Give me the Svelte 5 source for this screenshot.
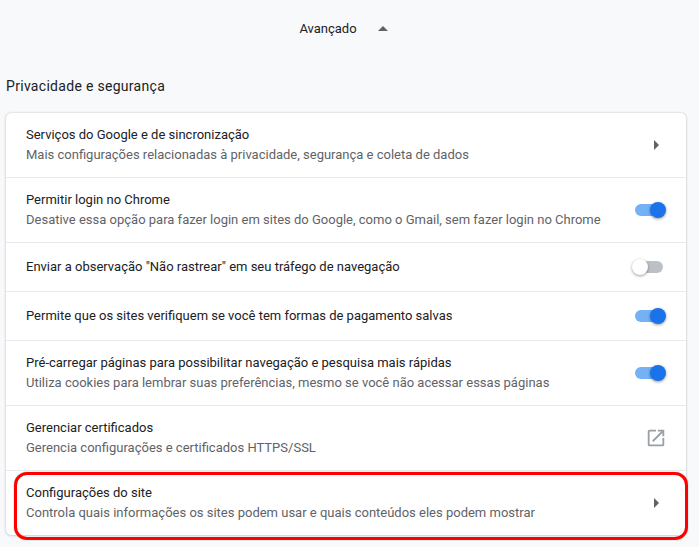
<script lang="ts">
  type Row = { title: string; sub?: string; kind: 'arrow' | 'on' | 'off' | 'ext'; h: number; mark?: boolean };

  const rows: Row[] = [
    { title: 'Serviços do Google e de sincronização', sub: 'Mais configurações relacionadas à privacidade, segurança e coleta de dados', kind: 'arrow', h: 64 },
    { title: 'Permitir login no Chrome', sub: 'Desative essa opção para fazer login em sites do Google, como o Gmail, sem fazer login no Chrome', kind: 'on', h: 65 },
    { title: 'Enviar a observação "Não rastrear" em seu tráfego de navegação', kind: 'off', h: 49 },
    { title: 'Permite que os sites verifiquem se você tem formas de pagamento salvas', kind: 'on', h: 49 },
    { title: 'Pré-carregar páginas para possibilitar navegação e pesquisa mais rápidas', sub: 'Utiliza cookies para lembrar suas preferências, mesmo se você não acessar essas páginas', kind: 'on', h: 65 },
    { title: 'Gerenciar certificados', sub: 'Gerencia configurações e certificados HTTPS/SSL', kind: 'ext', h: 65 },
    { title: 'Configurações do site', sub: 'Controla quais informações os sites podem usar e quais conteúdos eles podem mostrar', kind: 'arrow', h: 65, mark: true }
  ];
</script>

<div class="page">
  <div class="advanced">
    <span>Avançado</span>
    <i class="caret"></i>
  </div>

  <h2>Privacidade e segurança</h2>

  <div class="card">
    {#each rows as row}
      <div class="row" style="height:{row.h}px">
        <div class="text">
          <div class="title">{row.title}</div>
          {#if row.sub}<div class="sub">{row.sub}</div>{/if}
        </div>
        {#if row.kind === 'arrow'}
          <i class="arrow"></i>
        {:else if row.kind === 'ext'}
          <svg class="ext" viewBox="0 0 24 24" width="22" height="22">
            <path fill="#9aa0a6" d="M19 19H5V5h7V3H5a2 2 0 0 0-2 2v14a2 2 0 0 0 2 2h14a2 2 0 0 0 2-2v-7h-2v7zM14 3v2h3.59l-9.83 9.83 1.41 1.41L19 6.41V10h2V3h-7z"/>
          </svg>
        {:else}
          <div class="toggle" class:on={row.kind === 'on'}><span class="knob"></span></div>
        {/if}
        {#if row.mark}<div class="mark"></div>{/if}
      </div>
    {/each}
  </div>
</div>

<style>
  :global(body) { margin:0; background:#f8f9fa; }
  .page     { width:699px; height:547px; overflow:hidden; background:#f8f9fa; font-family:Roboto, "Liberation Sans", sans-serif; font-size:13px; color:#202124; }
  .advanced { height:56px; display:flex; align-items:center; justify-content:center; gap:21px; padding-right:12px; box-sizing:border-box; }
  .caret    { width:0; height:0; border-left:5px solid transparent; border-right:5px solid transparent; border-bottom:5px solid #5f6368; }
  h2        { margin:0; height:57px; padding:21px 0 0 6px; box-sizing:border-box; font-size:14px; font-weight:400; line-height:18px; letter-spacing:.3px; }
  .card     { width:680px; margin-left:6px; background:#fff; border-radius:5px; box-shadow:0 0 2px rgba(60,64,67,.3), 0 1px 3px rgba(60,64,67,.15); }
  .row      { position:relative; display:flex; align-items:center; justify-content:space-between; box-sizing:border-box; padding:0 20px; border-top:1px solid #e8eaed; }
  .row:first-child { border-top:0; }
  .title    { line-height:20px; }
  .sub      { line-height:20px; color:#5f6368; }
  .arrow    { width:0; height:0; margin-right:7px; border-top:5px solid transparent; border-bottom:5px solid transparent; border-left:5px solid #5f6368; }
  .ext      { margin-right:-1px; }
  .toggle   { position:relative; width:28px; height:12px; margin-right:3px; border-radius:6px; background:#bdc1c6; }
  .toggle.on { background:#74b1f5; }
  .knob     { position:absolute; left:-3px; top:-2px; width:16px; height:16px; border-radius:50%; background:#fff; box-shadow:0 1px 3px rgba(0,0,0,.4); }
  .toggle.on .knob { left:15px; background:#1a73e8; }
  .mark     { position:absolute; left:8px; right:-2px; top:1px; height:68px; box-sizing:border-box; border:3px solid #f00; border-radius:13px; box-shadow:0 0 1px rgba(0,0,0,.6); }
</style>
